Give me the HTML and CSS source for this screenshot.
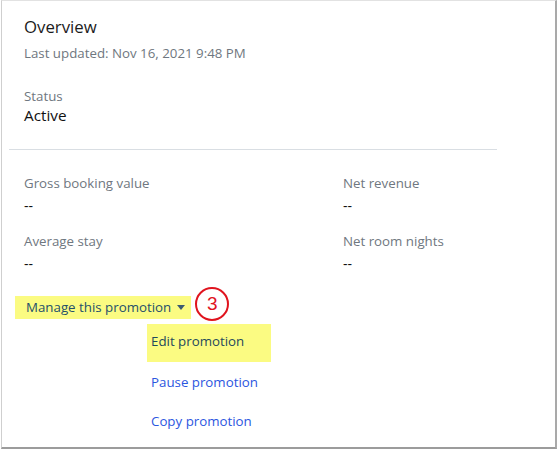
FILE: index.html
```html
<!DOCTYPE html>
<html>
<head>
<meta charset="utf-8">
<link rel="stylesheet" href="styles.css">
</head>
<body>
<div class="frame">
  <div class="panel">
    <div class="head">
      <h1 class="title">Overview</h1>
      <div class="updated">Last updated: Nov 16, 2021 9:48 PM</div>
      <div class="label status-label">Status</div>
      <div class="status">Active</div>
    </div>
    <hr class="divider">
    <div class="metrics">
      <div class="metric">
        <div class="label">Gross booking value</div>
        <div class="value">--</div>
      </div>
      <div class="metric">
        <div class="label">Net revenue</div>
        <div class="value">--</div>
      </div>
      <div class="metric">
        <div class="label">Average stay</div>
        <div class="value">--</div>
      </div>
      <div class="metric">
        <div class="label">Net room nights</div>
        <div class="value">--</div>
      </div>
    </div>
    <div class="manage-row">
      <span class="manage hl">Manage this promotion <svg class="caret" width="8" height="5" viewBox="0 0 8 5"><path d="M0 0h8L4 5z" fill="currentColor"/></svg></span>
      <span class="step">3</span>
    </div>
    <ul class="menu">
      <li><span class="item edit hl">Edit promotion</span></li>
      <li><span class="item link">Pause promotion</span></li>
      <li><span class="item link">Copy promotion</span></li>
    </ul>
  </div>
</div>
</body>
</html>
```
FILE: styles.css
```css
html, body {
  margin: 0;
  padding: 0;
  background: #fff;
}
body {
  font-family: "Open Sans", "Noto Sans", sans-serif;
  width: 558px;
  height: 450px;
  overflow: hidden;
}
.frame {
  margin-left: 1px;
  width: 553px;
  height: 446px;
  border-top: 1px solid #e2e2e2;
  border-left: 1px solid #cfcfcf;
  border-right: 2px solid #a9a9a9;
  border-bottom: 2px solid #9c9c9c;
  background: #fff;
}
.panel {
  padding-left: 7px;
  width: 488px;
}
.head {
  padding: 14px 0 0 15px;
}
.title {
  margin: 0;
  font-size: 16.8px;
  font-weight: 400;
  color: #1b1b1b;
  line-height: 24px;
}
.updated {
  margin-top: 5px;
  font-size: 13.3px;
  color: #6f7780;
  line-height: 18px;
}
.label {
  font-size: 13.3px;
  color: #6f7780;
  line-height: 18px;
}
.status-label {
  margin-top: 25px;
}
.status {
  font-size: 15.3px;
  color: #111;
  line-height: 20px;
  margin-top: 0;
}
.divider {
  margin: 24px 0 0 0;
  border: 0;
  border-top: 1px solid #d9dee3;
  height: 0;
}
.metrics {
  display: grid;
  grid-template-columns: 319px 1fr;
  padding: 24px 0 0 15px;
  row-gap: 17px;
}
.value {
  font-size: 14px;
  color: #111;
  line-height: 18px;
  margin-top: 5px;
}
.manage-row {
  display: flex;
  align-items: center;
  margin-top: 23px;
  padding-left: 6px;
  height: 23px;
}
.hl {
  background: #fbfb82;
}
.manage {
  display: inline-flex;
  align-items: center;
  padding: 1px 6px 3px 11px;
  height: 19px;
  font-size: 13.3px;
  color: #24506a;
}
.caret {
  margin-left: 6px;
  margin-top: 2px;
  color: #3b5a72;
}
.step {
  align-self: flex-start;
  margin: -9px 0 -12px 4px;
  width: 34px;
  height: 34px;
  box-sizing: border-box;
  border: 2px solid #e0141e;
  border-radius: 50%;
  display: flex;
  align-items: center;
  justify-content: center;
  color: #e0141e;
  font-family: "Liberation Sans", sans-serif;
  font-size: 19px;
}
.menu {
  list-style: none;
  margin: 5px 0 0 0;
  padding: 0 0 0 138px;
}
.menu li {
  height: 39px;
  display: flex;
  align-items: center;
}
.menu li:first-child {
  height: 38px;
  align-items: stretch;
}
.item {
  font-size: 13.3px;
  line-height: 18px;
}
.edit {
  display: inline-block;
  width: 120px;
  padding: 8px 0 12px 4px;
  color: #1f4a5c;
}
.link {
  color: #2b56e0;
  padding-left: 4px;
}
```
